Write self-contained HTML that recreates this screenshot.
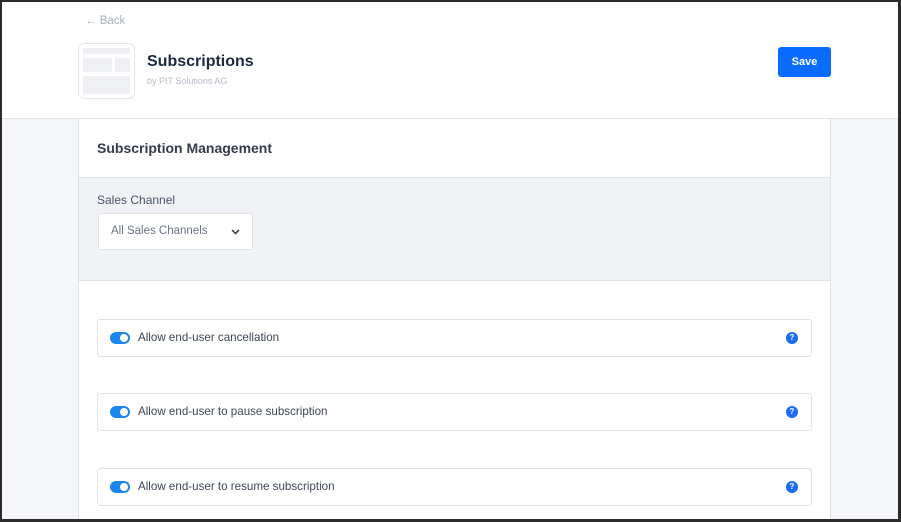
<!DOCTYPE html>
<html><head><style>
*{box-sizing:border-box;margin:0;padding:0}
html,body{width:901px;height:522px;overflow:hidden}
body{font-family:"Liberation Sans",sans-serif;background:#f4f6f9;position:relative}
.frame{position:absolute;inset:0;border:2px solid #2b2b2b;border-right-width:3px;border-bottom-width:3px;z-index:10;pointer-events:none}
.top{position:absolute;left:0;top:0;width:901px;height:119px;background:#fff;border-bottom:1px solid #e0e4ea}
.back{position:absolute;left:85px;top:15px;font-size:11.5px;color:#a6b0bf}
.logo{position:absolute;left:78px;top:43px;width:57px;height:56px;border:1px solid #e3e6eb;border-radius:6px;background:#fff}
.logo i{position:absolute;background:#eef0f3}
h1{position:absolute;left:147px;top:53px;font-size:16px;font-weight:bold;color:#1a2a40}
.by{position:absolute;left:147px;top:76px;font-size:9px;color:#b3bbc7}
.save{position:absolute;left:778px;top:47px;width:53px;height:30px;background:#0a6cff;border-radius:3px;color:#fff;font-size:11px;font-weight:bold;text-align:center;line-height:30px}
.card{position:absolute;left:78px;top:119px;width:753px;height:410px;background:#fff;border:1px solid #dfe3e9;border-top:none}
.ch{height:59px;border-bottom:1px solid #dfe3e9;padding:21px 0 0 18px;font-size:14px;font-weight:bold;color:#333d4a}
.gray{height:103px;background:#f0f2f5;border-bottom:1px solid #dfe3e9;position:relative}
.lbl{position:absolute;left:18px;top:15px;font-size:12px;color:#4a5565}
.sel{position:absolute;left:19px;top:35px;width:155px;height:37px;background:#fff;border:1px solid #dfe3e9;border-radius:3px;font-size:11.5px;color:#6b7585;padding:11px 0 0 12px}
.sel svg{position:absolute;left:132px;top:15px}
.row{position:absolute;left:18px;width:715px;height:38px;border:1px solid #dfe3e9;border-radius:3px}
.tg{position:absolute;left:12px;top:12px;width:20px;height:12px;border-radius:6px;background:#1a86f0}
.tg:after{content:"";position:absolute;right:2px;top:2px;width:8px;height:8px;border-radius:50%;background:#fff}
.row span{position:absolute;left:40px;top:11px;font-size:11.6px;color:#3c4654}
.q{position:absolute;right:13px;top:12px;width:12px;height:12px;border-radius:50%;background:#1a6cf0;color:#fff;font-size:8px;font-weight:bold;text-align:center;line-height:12px}
</style></head><body>
<div class="top">
<div class="back">&larr; Back</div>
<div class="logo"><i style="left:4px;top:4px;width:47px;height:6px"></i><i style="left:4px;top:14px;width:29px;height:14px"></i><i style="left:36px;top:14px;width:15px;height:14px"></i><i style="left:4px;top:32px;width:47px;height:18px"></i></div>
<h1>Subscriptions</h1>
<div class="by">by PIT Solutions AG</div>
<div class="save">Save</div>
</div>
<div class="card">
<div class="ch">Subscription Management</div>
<div class="gray"><div class="lbl">Sales Channel</div><div class="sel">All Sales Channels<svg width="9" height="6" viewBox="0 0 9 6"><path d="M1 1l3.5 3.5L8 1" stroke="#3c4654" stroke-width="1.6" fill="none"/></svg></div></div>
<div class="row" style="top:200px"><div class="tg"></div><span>Allow end-user cancellation</span><div class="q">?</div></div>
<div class="row" style="top:274px"><div class="tg"></div><span>Allow end-user to pause subscription</span><div class="q">?</div></div>
<div class="row" style="top:349px"><div class="tg"></div><span>Allow end-user to resume subscription</span><div class="q">?</div></div>
</div>
<div class="frame"></div>
</body></html>
